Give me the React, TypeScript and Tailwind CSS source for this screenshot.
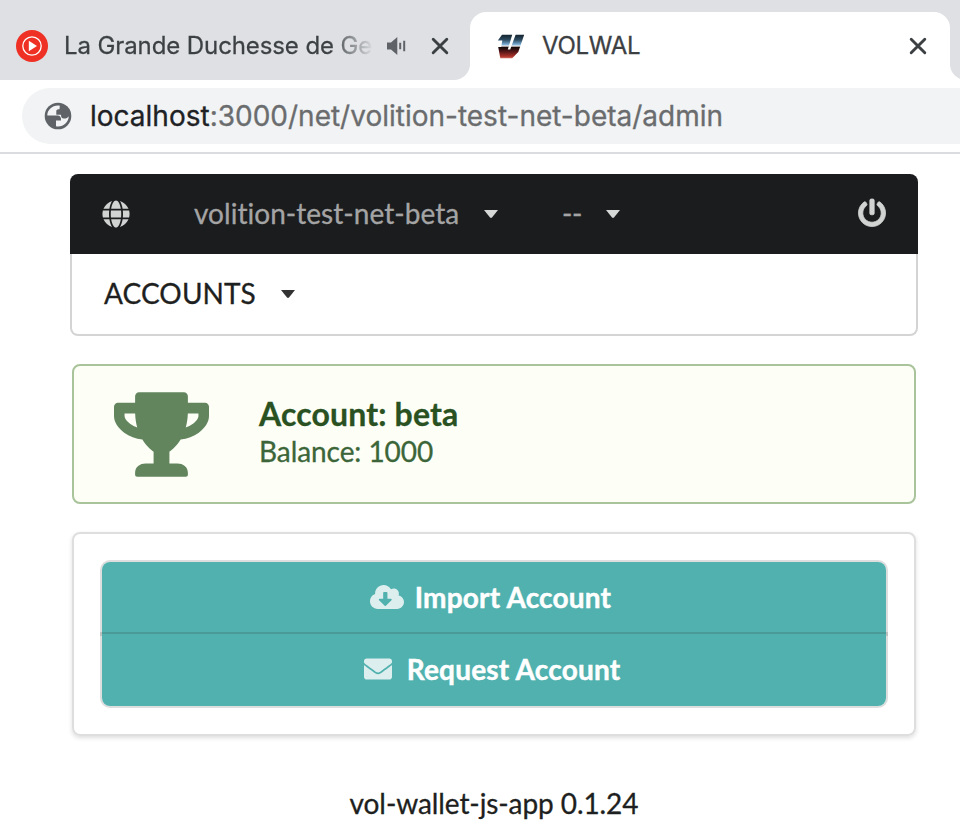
import React from "react";
import { FaGlobe, FaPowerOff, FaTrophy, FaCloudDownloadAlt, FaEnvelope } from "react-icons/fa";

function CloseIcon() {
  return (
    <svg width="18" height="18" viewBox="0 0 18 18" fill="none" stroke="#3c4043" strokeWidth="2.9" strokeLinecap="round">
      <path d="M2.2 2.2 15.8 15.8M15.8 2.2 2.2 15.8" />
    </svg>
  );
}

function MusicIcon() {
  return (
    <svg width="32" height="32" viewBox="0 0 32 32">
      <circle cx="16" cy="16" r="16" fill="#ee3124" />
      <circle cx="16" cy="16" r="9.2" fill="none" stroke="#fff" strokeWidth="1.3" />
      <path d="M12.8 10.8v10.4l8.2-5.2z" fill="#fff" />
    </svg>
  );
}

function SpeakerIcon() {
  return (
    <svg width="20" height="18" viewBox="0 0 20 18" fill="#5f6368">
      <path d="M0 5.5h4L10.3 0v18L4 12.5H0z" />
      <path d="M12.2 5.7h2v6.6h-2zM16.2 3.8h2v10.4h-2z" />
    </svg>
  );
}

function VolwalLogo() {
  return (
    <svg width="28" height="26" viewBox="0 0 28 26">
      <defs>
        <linearGradient id="chrome" x1="0" y1="0" x2="0" y2="1">
          <stop offset="0" stopColor="#14242f" />
          <stop offset="0.22" stopColor="#2d4a60" />
          <stop offset="0.41" stopColor="#76a9d0" />
          <stop offset="0.47" stopColor="#d3e2ee" />
          <stop offset="0.5" stopColor="#b3a5a3" />
          <stop offset="0.54" stopColor="#150a0a" />
          <stop offset="0.7" stopColor="#4e1415" />
          <stop offset="0.92" stopColor="#ab3229" />
          <stop offset="1" stopColor="#cf6a5e" />
        </linearGradient>
      </defs>
      <path d="M5 1.7H15.2L10.8 16.6H13.2L18.6 1.700H27.2L21.300 19 15.200 25.200H3.300L1.200 14H4.200L5.300 7.500H.8z" fill="url(#chrome)" />
    </svg>
  );
}

function SiteIcon() {
  return (
    <svg width="28" height="28" viewBox="0 0 28 28">
      <circle cx="14" cy="14" r="13.3" fill="#5f6368" />
      <path
        d="M15.8 3.7C9 2.7 3.3 7.5 3.3 13.5H13.5C16 13.5 17.3 15 17 18.6H12V24.3C18.5 25.5 24.6 21 24.7 14.3C23.5 16.2 22 16.7 20 16.6C17.5 16.5 17 15 17 12.7H12.3V9.3C12.3 7.7 13.2 7.2 15.5 7.2Z"
        fill="#f1f3f4"
      />
    </svg>
  );
}

function Caret({ className }: { className: string }) {
  return (
    <svg width="14" height="8" viewBox="0 0 14 8" className={className} fill="currentColor">
      <path d="M0 0h14L8 7.5q-1 .9-2 0z" />
    </svg>
  );
}

function BrowserChrome() {
  return (
    <header className="font-['Inter',sans-serif]">
      <div className="flex h-20 overflow-hidden bg-white">
        <div className="flex w-[470px] shrink-0 items-center rounded-br-[16px] bg-[#dee0e4] pt-3 pl-4">
          <MusicIcon />
          <div className="ml-4 w-[310px] bg-gradient-to-r from-[#3c4043] from-86% to-[#3c404300] bg-clip-text text-[24px] leading-8 tracking-[-0.1px] whitespace-nowrap text-transparent">
            La Grande Duchesse de Ge
          </div>
          <div className="ml-[13px]">
            <SpeakerIcon />
          </div>
          <div className="ml-[24px]">
            <CloseIcon />
          </div>
        </div>
        <div className="w-[480px] shrink-0 bg-[#dee0e4] pt-3">
          <div className="flex h-full items-center rounded-t-[16px] bg-white pr-[23px] pl-[27px]">
            <VolwalLogo />
            <span className="ml-[17px] flex-1 text-[24px] leading-8 tracking-[-0.3px] text-[#3c4043]">VOLWAL</span>
            <CloseIcon />
          </div>
        </div>
        <div className="w-10 shrink-0 rounded-bl-[16px] bg-[#dee0e4]" />
      </div>
      <div className="h-[74px] border-b-2 border-[#dadce0] bg-white pt-2 pl-[22px]">
        <div className="flex h-14 items-center rounded-l-full bg-[#f1f3f4] pl-[22px]">
          <SiteIcon />
          <span className="ml-[18px] text-[28px] leading-8 whitespace-nowrap text-[#6a6c6e] [-webkit-text-stroke:0.3px]">
            <span className="text-[#202124]">localhost</span>:3000/net/volition-test-net-beta/admin
          </span>
        </div>
      </div>
    </header>
  );
}

function Menus() {
  return (
    <nav className="text-[28px] leading-8">
      <div className="flex h-20 items-center rounded-t-lg bg-[#1b1c1d] px-8 text-[#a4a4a5]">
        <FaGlobe size={28} className="mb-px text-[#d1d2d2]" />
        <span className="ml-[64px] w-[265px] pb-0.5 tracking-[0.04px] whitespace-nowrap">volition-test-net-beta</span>
        <Caret className="ml-[25px] text-[#d6d7d7]" />
        <span className="ml-[64px] w-[18px] pb-0.5 tracking-[-0.5px] whitespace-nowrap">--</span>
        <Caret className="ml-[26px] text-[#d6d7d7]" />
        <FaPowerOff size={28} className="mb-0.5 ml-auto overflow-visible stroke-[#d1d2d2] stroke-[14] text-[#d1d2d2]" />
      </div>
      <div className="flex h-[82px] items-center rounded-b-lg border-2 border-t-0 border-[#d4d4d5] px-[32px] text-[#1e1f20]">
        <span className="w-[152px] pb-0.5 tracking-[0.1px]">ACCOUNTS</span>
        <Caret className="ml-[25px] text-[#333]" />
      </div>
    </nav>
  );
}

function ActionButton({ icon, label, className }: { icon: React.ReactNode; label: string; className: string }) {
  return (
    <button
      className={
        "flex items-center justify-center bg-[#50b1ae] text-[28px] leading-7 font-bold tracking-[0.2px] text-white [-webkit-text-stroke:0.45px] " + className
      }
    >
      {icon}
      {label}
    </button>
  );
}

export default function App() {
  return (
    <div className="h-[836px] overflow-hidden bg-white font-['Lato',sans-serif] [font-variant-ligatures:none] [-webkit-text-stroke:0.3px]">
      <BrowserChrome />
      <main className="pt-5 pr-[42px] pl-[70px]">
        <Menus />
        <section className="mx-0.5 mt-7 flex h-[140px] items-center rounded-lg border-2 border-[#a9c39a] bg-[#fdfff6] pl-[39.5px]">
          <FaTrophy className="h-[85px] w-[95px] text-[#62855e]" />
          <div className="ml-[50.5px] pb-2">
            <div className="text-[32px] leading-[41px] font-bold tracking-[0.15px] text-[#2a5122]">Account: beta</div>
            <div className="text-[28px] leading-[34px] tracking-[-0.07px] text-[#3c6639]">Balance: 1000</div>
          </div>
        </section>
        <section className="mx-0.5 mt-7 h-[204px] rounded-lg border-2 border-[#dededf] p-[26px] shadow-[0_2px_4px_rgba(34,36,38,0.15)]">
          <div className="flex h-[148px] flex-col rounded-[10px] border-2 border-[#dedede]">
            <ActionButton
              className="h-[70px] rounded-t-lg pr-[7px] pb-px"
              icon={<FaCloudDownloadAlt className="mr-[11px] h-[28px] w-[34px] text-[#dceeee]" />}
              label="Import Account"
            />
            <div className="relative h-0.5 bg-[#4a9b98]">
              <span className="absolute top-0 -left-0.5 h-1 w-0.5 bg-[#bfc1c1]" />
              <span className="absolute top-0 -right-0.5 h-1 w-0.5 bg-[#bfc1c1]" />
            </div>
            <ActionButton
              className="h-[72px] rounded-b-lg pr-[4px] pb-[2px]"
              icon={<FaEnvelope className="mr-[15px] h-7 w-7 text-[#dceeee]" />}
              label="Request Account"
            />
          </div>
        </section>
        <footer className="mt-[51px] text-center text-[28px] leading-8 tracking-[-0.09px] text-[#1e1f20]">vol-wallet-js-app 0.1.24</footer>
      </main>
    </div>
  );
}
